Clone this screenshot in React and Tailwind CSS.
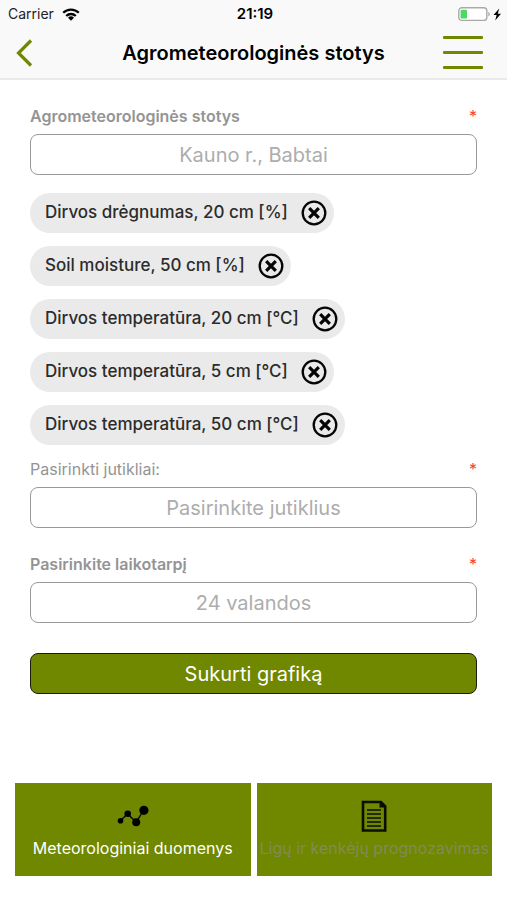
import { useState } from "react";

const initialSensors = [
  "Dirvos drėgnumas, 20 cm [%]",
  "Soil moisture, 50 cm [%]",
  "Dirvos temperatūra, 20 cm [°C]",
  "Dirvos temperatūra, 5 cm [°C]",
  "Dirvos temperatūra, 50 cm [°C]",
];

function StatusBar() {
  return (
    <div className="flex h-7 items-center pr-[5px] pl-2 text-sm text-[#222]">
      <div className="flex flex-1 items-center gap-2">
        <span>Carrier</span>
        <svg viewBox="0 0 18 13" className="h-[13px] w-[18px]" fill="none" stroke="#050505" strokeWidth="2.3" aria-hidden="true">
          <path d="M1.2 4.8a11 11 0 0 1 15.6 0" />
          <path d="M4.2 8a6.8 6.8 0 0 1 9.6 0" />
          <path d="M9 12.7 6 9.8a4.3 4.3 0 0 1 6 0Z" fill="#050505" stroke="none" />
        </svg>
      </div>
      <span className="text-center text-[15px] font-semibold text-black">21:19</span>
      <div className="flex flex-1 justify-end">
        <svg viewBox="0 0 44 15" className="h-[15px] w-11" aria-hidden="true">
          <rect x="0.8" y="0.8" width="28" height="12.6" rx="3" fill="#fff" stroke="#a9a9a9" strokeWidth="1.4" />
          <rect x="2.6" y="2.7" width="6.4" height="8.8" rx="1" fill="#4cd964" />
          <path d="M30.3 5c2 .5 2 3.8 0 4.3Z" fill="#a9a9a9" />
          <path d="m41.2 1.5-5.7 6.5h3.1l-1.4 5.5 5.8-6.8h-3.2Z" fill="#050505" />
        </svg>
      </div>
    </div>
  );
}

function Header() {
  return (
    <header className="border-b-2 border-[#e9e9e9] bg-[#f9f9f9]">
      <StatusBar />
      <div className="flex h-[50px] items-center justify-between pr-6 pb-px pl-4">
        <button type="button" aria-label="Atgal" className="flex w-12 items-center">
          <svg viewBox="0 0 18 28" className="h-7 w-[18px]" fill="none" stroke="#708700" strokeWidth="3.2" aria-hidden="true">
            <path d="M15 1.5 2.5 14 15 26.5" />
          </svg>
        </button>
        <h1 className="text-xl font-semibold text-black">Agrometeorologinės stotys</h1>
        <button type="button" aria-label="Meniu" className="flex w-10 flex-col gap-3 pb-px">
          <span className="h-[3px] w-full rounded-[1px] bg-[#708700]" />
          <span className="h-[3px] w-full rounded-[1px] bg-[#708700]" />
          <span className="h-[3px] w-full rounded-[1px] bg-[#708700]" />
        </button>
      </div>
    </header>
  );
}

function Field({ id, label, placeholder, bold = true }) {
  return (
    <div>
      <div className="flex h-5 items-center justify-between text-base">
        <label htmlFor={id} className={bold ? "font-semibold text-[#949494]" : "text-[#949494]"}>
          {label}
        </label>
        <span className="text-[#ff3b30]">*</span>
      </div>
      <input
        id={id}
        type="text"
        required
        placeholder={placeholder}
        className="mt-2 block h-[41px] w-full rounded-lg border border-[#999] bg-white px-3 text-center text-xl text-[#555] placeholder:text-[#adadad]"
      />
    </div>
  );
}

function Chip({ text, onRemove }) {
  return (
    <li className="flex h-10 items-center gap-3 rounded-full bg-[#eaeaea] pr-[6px] pl-[15px] text-[17px] font-medium text-[#2c2c2c]">
      {text}
      <button type="button" aria-label={`Pašalinti ${text}`} onClick={onRemove}>
        <svg viewBox="0 0 28 28" className="size-7" fill="none" stroke="#050505" aria-hidden="true">
          <circle cx="14" cy="14" r="11.3" strokeWidth="2.3" />
          <path d="m9.2 9.2 9.6 9.6m0-9.6-9.6 9.6" strokeWidth="3.2" />
        </svg>
      </button>
    </li>
  );
}

function ChartIcon() {
  return (
    <svg viewBox="0 0 32 32" className="size-8" aria-hidden="true">
      <path d="m3.5 20.7 7-7 8.7 8.5 7.5-12" fill="none" stroke="#050505" strokeWidth="1.3" />
      <circle cx="3.5" cy="20.7" r="2.8" />
      <circle cx="10.7" cy="13.7" r="3.3" />
      <circle cx="19.2" cy="22.2" r="4" />
      <circle cx="26.9" cy="10.3" r="4.6" />
    </svg>
  );
}

function DocumentIcon() {
  return (
    <svg viewBox="0 0 32 32" className="size-8" fill="none" stroke="#0b0e00" aria-hidden="true">
      <path d="M5 2h18l4.200 4.200V30.500H5Z" strokeWidth="2.600" />
      <path d="M21.500 1.500V7.500H28Z" fill="#0b0e00" stroke="none" />
      <path d="M9 10h14M9 14h14M9 18h14M9 22h14M9 26h14" strokeWidth="1.600" />
    </svg>
  );
}

export default function App() {
  const [sensors, setSensors] = useState(initialSensors);
  return (
    <div className="flex min-h-screen flex-col bg-white font-['Inter','Liberation_Sans',sans-serif]">
      <Header />
      <main className="px-[30px] pt-[26px]">
        <Field id="station" label="Agrometeorologinės stotys" placeholder="Kauno r., Babtai" />
        <ul className="mt-[18px] mb-[14px] flex flex-col items-start gap-[13px]">
          {sensors.map((text) => (
            <Chip key={text} text={text} onRemove={() => setSensors(sensors.filter((s) => s !== text))} />
          ))}
        </ul>
        <Field id="sensors" label="Pasirinkti jutikliai:" placeholder="Pasirinkite jutiklius" bold={false} />
        <div className="mt-[26px]">
          <Field id="period" label="Pasirinkite laikotarpį" placeholder="24 valandos" />
        </div>
        <button type="button" className="mt-[30px] h-[41px] w-full rounded-lg border border-[#1a1d0a] bg-[#708700] text-xl text-white">
          Sukurti grafiką
        </button>
      </main>
      <nav className="mt-auto grid grid-cols-2 gap-[6px] px-[15px] pb-6 text-base">
        <button type="button" className="flex h-[93px] flex-col items-center gap-1 bg-[#708700] pt-[17px] text-white">
          <ChartIcon />
          <span className="whitespace-nowrap">Meteorologiniai duomenys</span>
        </button>
        <button type="button" className="flex h-[93px] flex-col items-center gap-1 bg-[#708700] pt-[17px] text-[#828a5a]">
          <DocumentIcon />
          <span className="whitespace-nowrap">Ligų ir kenkėjų prognozavimas</span>
        </button>
      </nav>
    </div>
  );
}
